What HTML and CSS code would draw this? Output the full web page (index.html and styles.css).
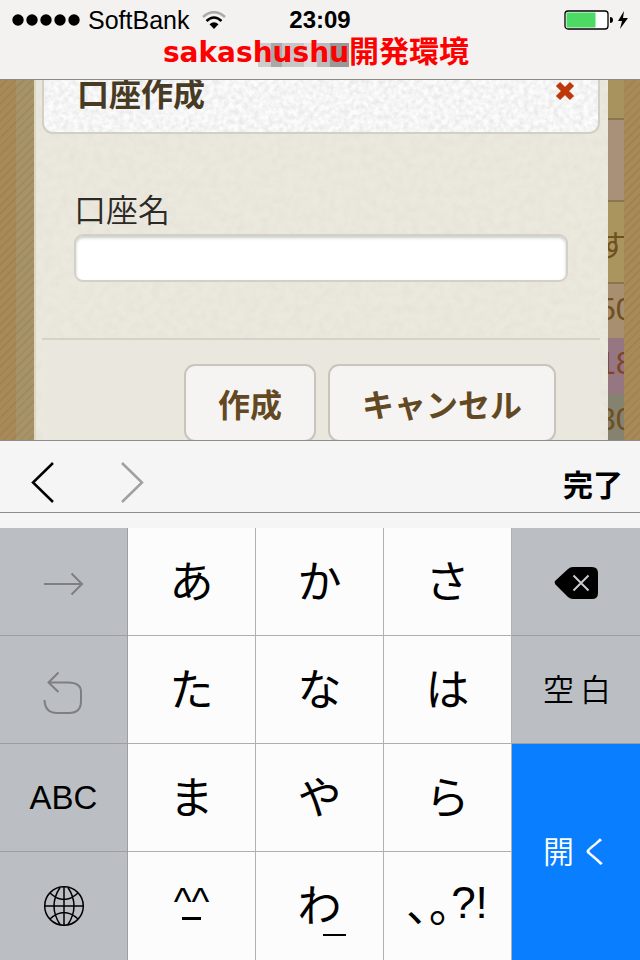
FILE: index.html
```html
<!DOCTYPE html>
<html lang="ja">
<head>
<meta charset="utf-8">
<meta name="viewport" content="width=device-width, initial-scale=1">
<title>口座作成</title>
<link rel="stylesheet" href="styles.css">
</head>
<body>
<header class="top">
  <div class="status">
    <div class="carrier">
      <svg class="dots" viewBox="0 0 68 12" aria-hidden="true"><circle cx="6" cy="6" r="5.7"/><circle cx="20" cy="6" r="5.7"/><circle cx="34" cy="6" r="5.7"/><circle cx="48" cy="6" r="5.7"/><circle cx="62" cy="6" r="5.7"/></svg>
      <span>SoftBank</span>
      <svg class="wifi" viewBox="0 0 24 18" aria-hidden="true"><path d="M1 6Q12-3.500 23 6" fill="none" stroke="#aaa" stroke-width="2.600"/><path d="M4.500 10Q12 3 19.500 10" fill="none" stroke="#000" stroke-width="2.600"/><path d="M7.500 13.300Q12 9 16.500 13.300L12 18z"/></svg>
    </div>
    <time class="clock">23:09</time>
    <div class="power">
      <svg class="battery" viewBox="0 0 64 24" aria-hidden="true"><rect x="1" y="3" width="43" height="18" rx="3" fill="#fff" stroke="#000" stroke-width="1.300"/><rect x="2.500" y="4.500" width="29" height="15" rx="1" fill="#4cd964"/><path d="M46 9q3 0 3 3t-3 3z"/><path d="M60 3l-6 10h4l-2 8 8-11h-5z"/></svg>
    </div>
  </div>
  <h1 class="site"><span class="site-latin">sakashushu</span><span class="site-env">開発環境</span></h1>
</header>

<main class="stage">
  <div class="backdrop">
    <ul class="records">
      <li class="rec rec-head"></li>
      <li class="rec rec-blank"></li>
      <li class="rec rec-name">す</li>
      <li class="rec rec-a">50</li>
      <li class="rec rec-b">18</li>
      <li class="rec rec-c">30</li>
    </ul>
  </div>
  <form class="modal">
    <svg class="grain" aria-hidden="true"><filter id="soft"><feTurbulence type="fractalNoise" baseFrequency=".12" numOctaves="3"/><feColorMatrix values="0 0 0 0 .7  0 0 0 0 .66  0 0 0 0 .6  .5 0 0 0 -.17"/></filter><rect width="100%" height="100%" filter="url(#soft)"/></svg>
    <div class="modal-head">
      <svg class="grain" aria-hidden="true"><filter id="paper"><feTurbulence type="fractalNoise" baseFrequency=".2" numOctaves="3"/><feColorMatrix values="0 0 0 0 .82  0 0 0 0 .82  0 0 0 0 .82  2 0 0 0 -.6"/></filter><rect width="100%" height="100%" filter="url(#paper)"/></svg>
      <h2 class="modal-title">口座作成</h2>
      <button class="close" type="button" aria-label="閉じる"><svg viewBox="0 0 20 20" aria-hidden="true"><path d="M3 3L17 17M17 3L3 17"/></svg></button>
    </div>
    <div class="modal-body">
      <label for="account">口座名</label>
      <input id="account" type="text">
    </div>
    <div class="modal-foot">
      <button class="btn btn-create" type="submit">作成</button>
      <button class="btn btn-cancel" type="button">キャンセル</button>
    </div>
  </form>
</main>

<nav class="assist">
  <button class="step" type="button" aria-label="前へ"><svg viewBox="0 0 24 40" aria-hidden="true"><path d="M22 0L2 19.500L22 39"/></svg></button>
  <button class="step step-off" type="button" aria-label="次へ"><svg viewBox="0 0 24 40" aria-hidden="true"><path d="M1 0L21 19.500L1 39"/></svg></button>
  <button class="done" type="button">完了</button>
</nav>

<section class="keys">
  <button class="key side" type="button" aria-label="次候補"><svg class="ico" viewBox="0 0 44 44" aria-hidden="true"><path d="M2 24H40M29.500 13.500L40 24L29.500 34.500"/></svg></button>
  <button class="key" type="button">あ</button>
  <button class="key" type="button">か</button>
  <button class="key" type="button">さ</button>
  <button class="key side" type="button" aria-label="削除"><svg class="ico del" viewBox="0 0 44 44" aria-hidden="true"><path class="del-body" d="M0 23Q-1 22 0 21L13 9Q15 7 18 7H37Q43 7 43 13V33Q43 39 37 39H18Q15 39 13 37L0 24z"/><path class="del-x" d="M18.500 15.500L33.500 30.500M33.500 15.500L18.500 30.500"/></svg></button>

  <button class="key side" type="button" aria-label="元に戻す"><svg class="ico" viewBox="0 0 44 44" aria-hidden="true"><path d="M16.500 4.500L6.500 14.500L16.500 24M6.500 14.500H26Q39 14.500 39 24V33Q39 45 27 45H15Q3 45 2.500 32"/></svg></button>
  <button class="key" type="button">た</button>
  <button class="key" type="button">な</button>
  <button class="key" type="button">は</button>
  <button class="key side word" type="button"><span>空</span><span>白</span></button>

  <button class="key side abc" type="button">ABC</button>
  <button class="key" type="button">ま</button>
  <button class="key" type="button">や</button>
  <button class="key" type="button">ら</button>
  <button class="key open word" type="button"><span>開</span><span>く</span></button>

  <button class="key side" type="button" aria-label="キーボード切替"><svg class="ico globe" viewBox="0 0 44 44" aria-hidden="true"><circle cx="22" cy="22" r="19.300"/><path d="M22 2.700V41.300M2.700 22H41.300M18 3.500Q6 22 18 40.500M26 3.500Q38 22 26 40.500M8 9Q22 22 36 9M8 35Q22 22 36 35"/></svg></button>
  <button class="key face" type="button"><span>^^</span><span class="mouth"></span></button>
  <button class="key wa" type="button"><span>わ</span><span class="dash"></span></button>
  <button class="key punct" type="button"><span class="marks">､｡</span><span>?!</span></button>
</section>
</body>
</html>
```

FILE: styles.css
```css
* { box-sizing: border-box; }

body {
  margin: 0;
  min-height: 100vh;
  display: flex;
  flex-direction: column;
  background: #f5f5f5;
  color: #000;
  font-family: "Liberation Sans", "Noto Sans CJK JP", sans-serif;
}

button {
  margin: 0;
  padding: 0;
  border: 0;
  background: none;
  color: inherit;
  font: inherit;
}

h1, h2, ul { margin: 0; padding: 0; }

/* status bar */
.top {
  height: 80px;
  background: #f3f2f1;
  border-bottom: 1px solid #8b8984;
}

.status {
  display: grid;
  grid-template-columns: 1fr auto 1fr;
  align-items: center;
  height: 40px;
  padding: 0 12px;
  font-size: 25px;
  line-height: 40px;
}

.carrier { display: flex; align-items: center; gap: 8px; }
.dots { width: 68px; height: 12px; }
.wifi { width: 24px; height: 18px; margin-left: 5px; }
.clock { font-size: 24px; font-weight: bold; }
.power { display: flex; justify-content: flex-end; }
.battery { width: 64px; height: 24px; }

.site {
  display: flex;
  justify-content: center;
  align-items: baseline;
  margin: -8px 8px 0 0;
  color: #f00;
  line-height: 34px;
  font-weight: bold;
}

.site-latin {
  font-family: "DejaVu Sans", sans-serif;
  font-size: 28px;
  background: linear-gradient(90deg, transparent 51%, #ccc 51% 58%, #a9a9a9 58% 64%, #c6c6c6 64% 76%, #ddd 76% 83%, #bbb 83% 90%, #999 90%) 0 7px / 100% 24px no-repeat;
}
.site-env { font-family: "Noto Sans CJK JP", sans-serif; font-size: 30px; }

/* page behind and dialog */
.stage {
  display: grid;
  height: 360px;
  overflow: hidden;
}

.backdrop, .modal { grid-area: 1 / 1; }

.backdrop {
  display: flex;
  justify-content: flex-end;
  padding: 0 16px;
  background:
    repeating-linear-gradient(135deg, transparent 0 4px, rgba(80, 50, 10, .08) 4px 6px),
    linear-gradient(90deg, #a88a59 16px, #a69367 16px calc(100% - 16px), #a88a59 calc(100% - 16px));
}

.records {
  width: 26px;
  overflow: hidden;
  list-style: none;
  color: #70501f;
  font-family: "Liberation Sans", "Noto Sans CJK JP", sans-serif;
}

.rec { border-bottom: 2px solid #8b7450; background: #a8925e; }
.rec-head { height: 40px; }
.rec-blank { height: 82px; background: #a99078; }
.rec-name { height: 82px; line-height: 88px; font-size: 30px; background: #aa955f; }
.rec-a, .rec-b, .rec-c { height: 54px; line-height: 50px; border: 0; font-size: 32px; }
.rec-a { background: #a88f6f; }
.rec-b { background: #967680; color: #7f4529; height: 56px; }
.rec-c { background: #85826f; }

.modal {
  position: relative;
  display: flex;
  flex-direction: column;
  margin: 0 32px 0 34px;
  padding: 0 8px 0 6px;
  background: #ebe8de;
  border-left: 2px solid #ded8c3;
}

.grain { position: absolute; inset: 0; width: 100%; height: 100%; }

.modal-head {
  position: relative;
  display: flex;
  justify-content: space-between;
  flex: none;
  height: 54px;
  padding: 0 23px 0 33px;
  overflow: hidden;
  background: #fcfcfc;
  border: 2px solid #d2cfc3;
  border-top: 0;
  border-radius: 0 0 11px 11px;
}

.modal-title {
  position: relative;
  font: bold 32px/24px "Noto Sans CJK JP", sans-serif;
  color: #483b24;
}

.close { position: relative; width: 20px; height: 22px; }
.close svg { display: block; width: 20px; height: 20px; }
.close path { stroke: #bf380c; stroke-width: 6; fill: none; }

.modal-body {
  position: relative;
  flex: none;
  height: 206px;
  padding: 50px 32px 0;
  border-bottom: 2px solid #d6d2c5;
  font: 32px/48px "Noto Sans CJK JP", sans-serif;
  color: #2c2a26;
}

.modal-body label { display: block; margin-bottom: 2px; font-weight: 350; }

.modal-body input {
  display: block;
  width: 100%;
  height: 48px;
  border: 2px solid #d3d0c5;
  border-radius: 9px;
  background: #fff;
  box-shadow: inset 0 2px 3px #ccc;
  font: inherit;
}

.modal-foot {
  position: relative;
  flex: 1;
  display: flex;
  justify-content: flex-end;
  gap: 12px;
  padding: 24px 44px 0 0;
  background: #eae8de;
}

.btn {
  height: 78px;
  padding: 0 32px;
  border: 2px solid #c9c4bc;
  border-radius: 11px;
  background: #f5f4f3;
  color: #634923;
  font: bold 32px/72px "Noto Sans CJK JP", sans-serif;
}

/* form assistant */
.assist {
  display: flex;
  align-items: center;
  height: 73px;
  padding: 12px 17px 0 31px;
  border-top: 1px solid #8d8c86;
  border-bottom: 1px solid #8c8c8c;
}

.step { width: 24px; height: 40px; margin-right: 66px; }
.step svg { display: block; width: 24px; height: 40px; overflow: visible; }
.step path { fill: none; stroke: #000; stroke-width: 2.5; }
.step-off path { stroke: #a0a0a0; }
.done { margin-left: auto; font: bold 30px/40px "Noto Sans CJK JP", sans-serif; }

/* kana keypad */
.keys {
  flex: 1;
  display: grid;
  grid-template-columns: repeat(5, 1fr);
  grid-template-rows: repeat(4, minmax(108px, 1fr));
  margin-top: 15px;
}

.key {
  display: flex;
  align-items: center;
  justify-content: center;
  padding-bottom: 6px;
  border-right: 1px solid #b0b1b3;
  border-bottom: 1px solid #adaeb0;
  background: #fcfcfc;
  font: 44px/60px "Noto Sans CJK JP", sans-serif;
}

.side { padding-bottom: 0; background: #bbbec3; border-right-color: #9c9ea3; border-bottom-color: #9c9ea3; }
.key:nth-child(5n) { padding-left: 2px; border-right: 0; }
.word { gap: 6px; padding-bottom: 4px; font-size: 31px; font-weight: 350; }
.abc { font: 33px/40px "Liberation Sans", sans-serif; }
.open { grid-row: span 2; background: #097eff; color: #fff; border: 0; }
.key:nth-last-child(-n+4) { border-bottom: 0; }

.ico { width: 44px; height: 44px; overflow: visible; fill: none; stroke: #7d7f84; stroke-width: 2; }
.del-body { fill: #000; stroke: none; }
.del-x { stroke: #c8cace; stroke-width: 2; }
.globe { stroke: #000; stroke-width: 1.5; }

.face { flex-direction: column; font: 38px/30px "Liberation Sans", sans-serif; }
.mouth { width: 19px; height: 3px; background: #000; }

.wa { position: relative; }
.dash { position: absolute; left: 67px; bottom: 24px; width: 23px; height: 2px; background: #000; }

.punct { font: 44px/60px "Liberation Sans", sans-serif; }
.marks { font-family: "Noto Sans CJK JP", sans-serif; }
```
